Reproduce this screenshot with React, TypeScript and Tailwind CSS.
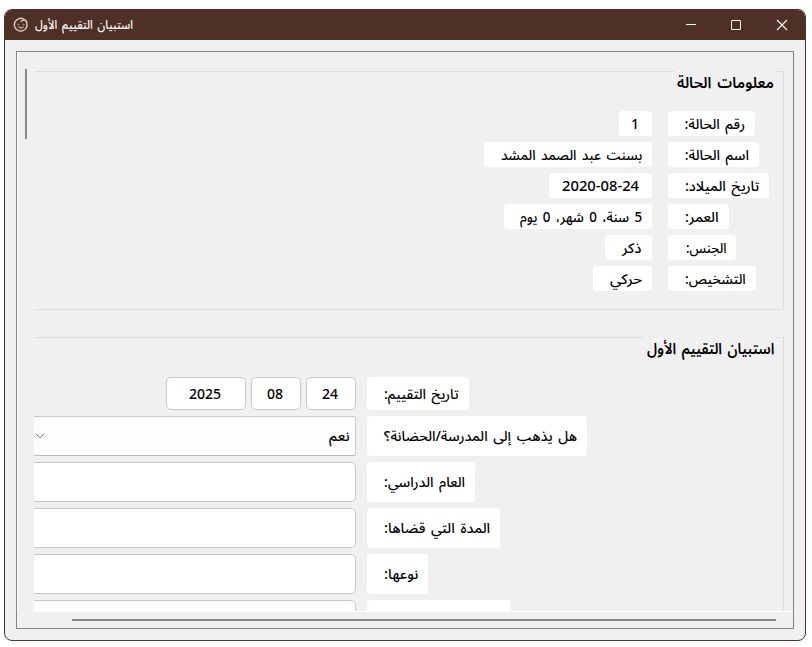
import { useLayoutEffect, useRef, useState } from "react";
import type { ReactNode } from "react";

// Text run squeezed or widened to a given width.
function Fit({ w, children, className = "" }: { w: number; children: ReactNode; className?: string }) {
  const ref = useRef<HTMLSpanElement>(null);
  const [scale, setScale] = useState(1);
  useLayoutEffect(() => {
    if (ref.current) setScale(w / ref.current.offsetWidth);
  }, [w]);
  return (
    <span className="flex shrink-0 justify-start" style={{ width: w }}>
      <span
        ref={ref}
        className={`block shrink-0 origin-right whitespace-nowrap [word-spacing:2px] ${className}`}
        style={{ transform: `scaleX(${scale})` }}
      >
        {children}
      </span>
    </span>
  );
}

const info = [
  { label: "رقم الحالة:", lw: 60, value: "1", vw: 8, pill: "w-[33px] pr-[13px]" },
  { label: "اسم الحالة:", lw: 64, value: "بسنت عبد الصمد المشد", vw: 141, pill: "w-[168px] pr-[10px]" },
  { label: "تاريخ الميلاد:", lw: 74, value: "2020-08-24", vw: 77, pill: "w-[103px] pr-[13px]" },
  { label: "العمر:", lw: 34, value: "5 سنة، 0 شهر، 0 يوم", vw: 122, pill: "w-[148px] pr-[10px]" },
  { label: "الجنس:", lw: 41, value: "ذكر", vw: 20, pill: "w-[47px] pr-[10px]" },
  { label: "التشخيص:", lw: 61, value: "حركي", vw: 32, pill: "w-[59px] pr-[10px]" },
];

function GroupTitle({ w, children }: { w: number; children: ReactNode }) {
  return (
    <div className="absolute right-[7px] -top-px flex h-[22px] items-center bg-[#f0f0f0] pr-[2px] pl-[3px] text-[15.5px] font-semibold">
      <Fit w={w}>{children}</Fit>
    </div>
  );
}

function FormRow({ label, w, children }: { label: string; w: number; children: ReactNode }) {
  return (
    <div className="flex h-10">
      <div className="flex w-[402px] shrink-0 justify-end">
        <div className="flex items-center rounded-[4px] bg-white pr-[10px] pl-[17px]">
          <Fit w={w}>{label}</Fit>
        </div>
      </div>
      {children}
    </div>
  );
}

function TextField() {
  return <div className="mr-[11px] h-10 w-[340px] shrink-0 rounded-[5px] border border-[#c9c9c9] bg-white" />;
}

function DateBox({ w, tw, children }: { w: string; tw: number; children: ReactNode }) {
  return (
    <div className={`flex h-[33px] items-center justify-center rounded-[5px] border border-[#c9c9c9] bg-white pr-[2px] ${w}`}>
      <Fit w={tw}>{children}</Fit>
    </div>
  );
}

export default function App() {
  return (
    <div
      dir="rtl"
      className="h-[647px] w-[812px] overflow-hidden bg-white pt-[9px] pr-[6px] pl-[4px] font-['Noto_Sans','Noto_Sans_Arabic','DejaVu_Sans',sans-serif] text-[14px] leading-5 font-[550] text-black"
    >
      <div className="flex h-[632px] flex-col overflow-hidden rounded-[8px] border border-[#4f3026] bg-[#f0f0f0]">
        <header dir="ltr" className="flex h-[30px] shrink-0 items-center bg-[#4f3026] pl-[8px] text-white">
          <svg width="16" height="16" viewBox="0 0 16 16" fill="none" stroke="#e2d8d4" strokeWidth="1.3">
            <path d="M6 1.6A6.4 6.4 0 1 0 13.9 6.2C13.5 4 11.8 2.6 10 2.2" />
            <path d="M6 1.6C8 .8 10.4 1.4 10.2 2.9C10 4.2 8.4 4.3 7.6 3.7" />
            <path d="M5.2 9.9c1.4 2 4.2 2 5.6 0Z" fill="#a8938b" stroke="#a8938b" strokeWidth=".6" />
            <path d="M4.4 7.5h1.8M9.8 7.5h1.8" stroke="#a8938b" />
          </svg>
          <div dir="rtl" className="ml-[6px] text-[12px] font-medium">
            <Fit w={98}>استبيان التقييم الأول</Fit>
          </div>
          <div className="ml-auto flex items-center pr-[17px]">
            <svg width="103" height="12" viewBox="0 0 103 12" fill="none" stroke="#fff">
              <path d="M1 5.5h10" />
              <rect x="46.5" y="1.5" width="9" height="9" rx=".5" />
              <path d="M92 1l10 10M102 1L92 11" strokeWidth="1.1" />
            </svg>
          </div>
        </header>

        <main className="mx-[11px] mt-[11px] flex h-[578px] flex-col border border-[#81848d]">
          <div dir="ltr" className="flex h-[560px] border-l border-white">
            <div className="w-4 shrink-0 pt-[17px] pl-[7px]">
              <div className="h-[70px] w-[2px] bg-[#868686]" />
            </div>
            <div
              dir="rtl"
              className="h-[560px] min-w-0 flex-1 overflow-hidden border-b border-white pt-[19px] pr-[9px]"
            >
              <section className="relative h-[239px] border-y border-r border-[#dcdcdc] pt-[39px] pr-[14px]">
                <GroupTitle w={97}>معلومات الحالة</GroupTitle>
                <div className="flex flex-col gap-[6px]">
                  {info.map((r) => (
                    <div key={r.label} className="flex h-[25px] gap-4">
                      <div className="flex w-[101px] justify-end">
                        <div className="flex items-center rounded-[4px] bg-white pr-[10px] pl-[17px]">
                          <Fit w={r.lw}>{r.label}</Fit>
                        </div>
                      </div>
                      <div className={`flex items-center rounded-[4px] bg-white ${r.pill}`}>
                        <Fit w={r.vw}>{r.value}</Fit>
                      </div>
                    </div>
                  ))}
                </div>
              </section>

              <section className="relative mt-[27px] h-[330px] border-t border-r border-[#dcdcdc] pt-[39px] pr-[14px]">
                <GroupTitle w={127}>استبيان التقييم الأول</GroupTitle>
                <div className="flex flex-col gap-[6px]">
                  <div className="flex h-[33px]">
                    <div className="flex w-[402px] shrink-0 justify-end">
                      <div className="flex items-center rounded-[4px] bg-white pr-[10px] pl-[17px]">
                        <Fit w={75}>تاريخ التقييم:</Fit>
                      </div>
                    </div>
                    <div className="mr-[11px] flex gap-[5px]">
                      <DateBox w="w-[50px]" tw={16}>24</DateBox>
                      <DateBox w="w-[50px]" tw={16}>08</DateBox>
                      <DateBox w="w-[80px]" tw={32}>2025</DateBox>
                    </div>
                  </div>
                  <FormRow label="هل يذهب إلى المدرسة/الحضانة؟" w={193}>
                    <div className="mr-[11px] flex h-10 w-[322px] shrink-0 items-center justify-between rounded-r-[2px] border-y border-r border-[#c9c9c9] border-b-[#b8b8b8] bg-[#fdfdfd] pr-[5px] pl-[1px]">
                      <Fit w={21}>نعم</Fit>
                      <svg width="10" height="6" viewBox="0 0 10 6" fill="none" stroke="#5f5f5f">
                        <path d="M1 .8l4 4 4-4" />
                      </svg>
                    </div>
                  </FormRow>
                  <FormRow label="العام الدراسي:" w={81}>
                    <TextField />
                  </FormRow>
                  <FormRow label="المدة التي قضاها:" w={106}>
                    <TextField />
                  </FormRow>
                  <FormRow label="نوعها:" w={34}>
                    <TextField />
                  </FormRow>
                  <FormRow label="" w={117}>
                    <TextField />
                  </FormRow>
                </div>
              </section>
            </div>
          </div>
          <div className="flex-1 pt-[7px] pr-[17px]">
            <div className="h-[2px] w-[704px] bg-[#868686]" />
          </div>
        </main>
      </div>
    </div>
  );
}
